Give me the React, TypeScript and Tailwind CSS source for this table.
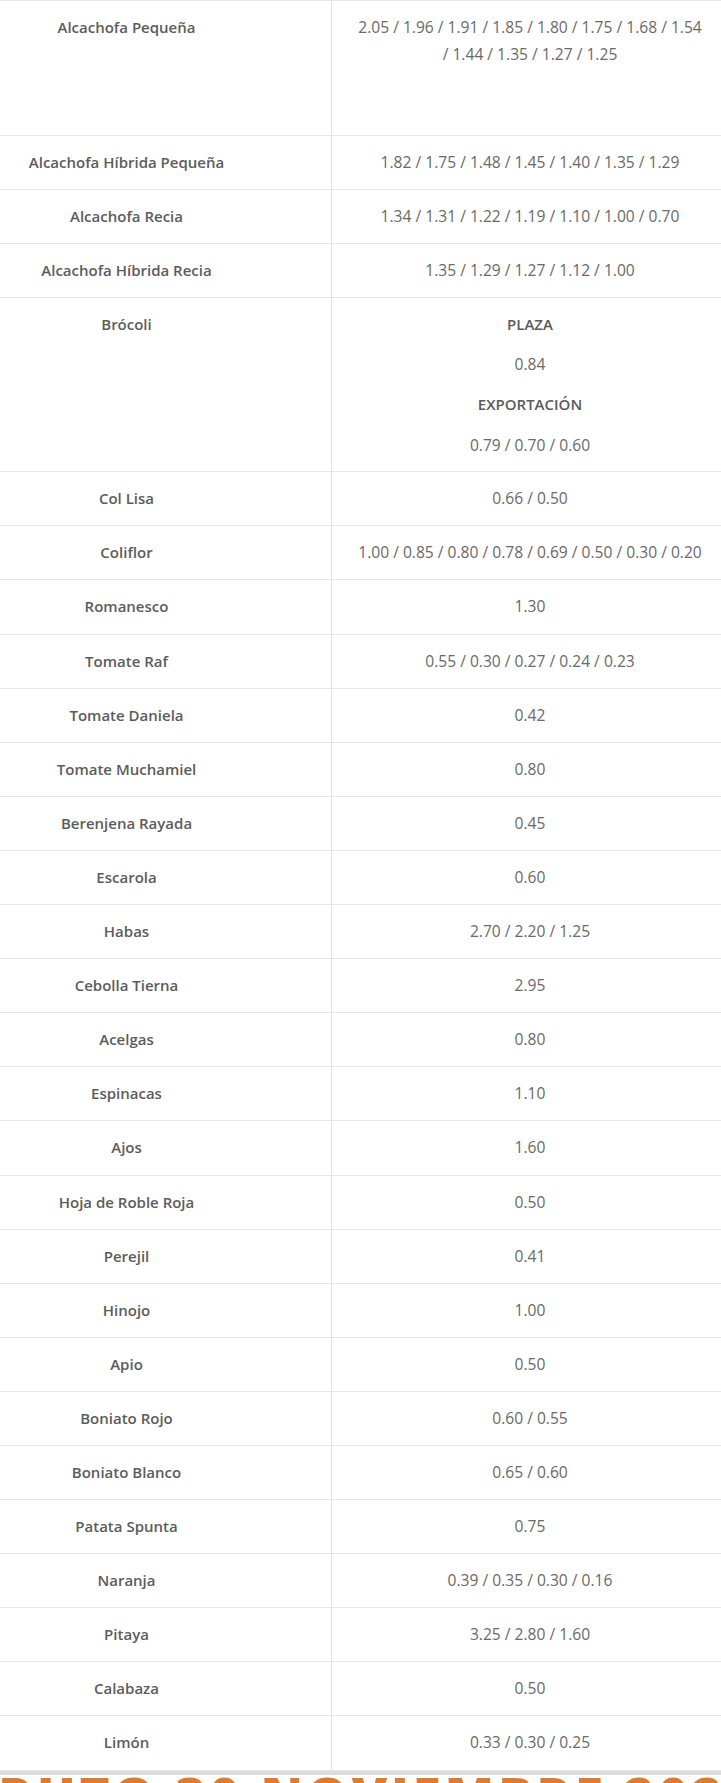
import React from "react";

type Row = { name: string; value?: string; h?: string; custom?: React.ReactNode };

const rows: Row[] = [
  { name: "Alcachofa Pequeña", value: "2.05 / 1.96 / 1.91 / 1.85 / 1.80 / 1.75 / 1.68 / 1.54 / 1.44 / 1.35 / 1.27 / 1.25", h: "h-[135px]" },
  { name: "Alcachofa Híbrida Pequeña", value: "1.82 / 1.75 / 1.48 / 1.45 / 1.40 / 1.35 / 1.29" },
  { name: "Alcachofa Recia", value: "1.34 / 1.31 / 1.22 / 1.19 / 1.10 / 1.00 / 0.70" },
  { name: "Alcachofa Híbrida Recia", value: "1.35 / 1.29 / 1.27 / 1.12 / 1.00" },
  {
    name: "Brócoli",
    h: "h-[174px]",
    custom: (
      <div className="flex flex-col gap-[13px]">
        <p className="font-semibold text-[15px] text-[#5a5a5a]">PLAZA</p>
        <p>0.84</p>
        <p className="font-semibold text-[15px] text-[#5a5a5a]">EXPORTACIÓN</p>
        <p>0.79 / 0.70 / 0.60</p>
      </div>
    ),
  },
  { name: "Col Lisa", value: "0.66 / 0.50" },
  { name: "Coliflor", value: "1.00 / 0.85 / 0.80 / 0.78 / 0.69 / 0.50 / 0.30 / 0.20" },
  { name: "Romanesco", value: "1.30" },
  { name: "Tomate Raf", value: "0.55 / 0.30 / 0.27 / 0.24 / 0.23" },
  { name: "Tomate Daniela", value: "0.42" },
  { name: "Tomate Muchamiel", value: "0.80" },
  { name: "Berenjena Rayada", value: "0.45" },
  { name: "Escarola", value: "0.60" },
  { name: "Habas", value: "2.70 / 2.20 / 1.25" },
  { name: "Cebolla Tierna", value: "2.95" },
  { name: "Acelgas", value: "0.80" },
  { name: "Espinacas", value: "1.10" },
  { name: "Ajos", value: "1.60" },
  { name: "Hoja de Roble Roja", value: "0.50" },
  { name: "Perejil", value: "0.41" },
  { name: "Hinojo", value: "1.00" },
  { name: "Apio", value: "0.50" },
  { name: "Boniato Rojo", value: "0.60 / 0.55" },
  { name: "Boniato Blanco", value: "0.65 / 0.60" },
  { name: "Patata Spunta", value: "0.75" },
  { name: "Naranja", value: "0.39 / 0.35 / 0.30 / 0.16" },
  { name: "Pitaya", value: "3.25 / 2.80 / 1.60" },
  { name: "Calabaza", value: "0.50" },
  { name: "Limón", value: "0.33 / 0.30 / 0.25" },
];

export default function App() {
  return (
    <div className="w-[721px] overflow-hidden bg-white font-['Open_Sans',sans-serif] text-[15.6px] leading-[27.1px]">
      <div className="ml-[-78px] w-[806px] border-t border-[#e6e6e6]">
        {rows.map((r, i) => (
          <div
            key={i}
            className={`grid grid-cols-[410px_396px] border-b border-[#e6e6e6] ${r.h ?? ""}`}
          >
            <div className="border-r border-[#e3e3e3] px-[22px] py-[13px] text-center text-[15px] font-semibold text-[#5c5c5c]">
              {r.name}
            </div>
            <div className="px-[22px] py-[13px] text-center text-[#6a6a6a]">
              {r.custom ?? r.value}
            </div>
          </div>
        ))}
      </div>
      <div className="h-[4px] bg-[#dcdcdc]" />
      <div className="overflow-hidden whitespace-nowrap pt-[3px] text-center text-[51px] font-extrabold leading-[34px] tracking-[4px] text-[#e07a2c]">
        <span className="ml-[-40px] inline-block">BRUTO 30 NOVIEMBRE 2023</span>
      </div>
    </div>
  );
}
